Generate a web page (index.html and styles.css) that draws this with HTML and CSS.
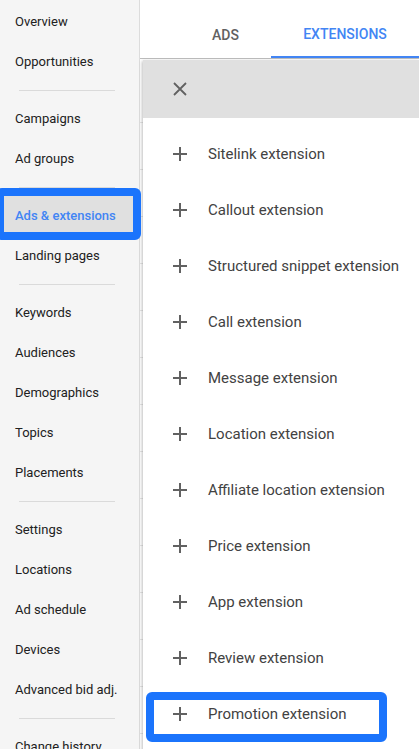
FILE: index.html
```html
<!DOCTYPE html>
<html lang="en">
<head>
    <meta charset="UTF-8">
    <meta name="viewport" content="width=device-width, initial-scale=1.0">
    <title>Ads &amp; extensions</title>
    <link rel="stylesheet" href="styles.css">
</head>
<body>
    <div class="app">
        <nav class="sidebar">
            <ul class="nav-group first">
                <li class="nav-item">Overview</li>
                <li class="nav-item">Opportunities</li>
            </ul>
            <div class="nav-divider"></div>
            <ul class="nav-group">
                <li class="nav-item">Campaigns</li>
                <li class="nav-item">Ad groups</li>
            </ul>
            <div class="nav-divider"></div>
            <ul class="nav-group">
                <li class="nav-item active">Ads &amp; extensions</li>
                <li class="nav-item">Landing pages</li>
            </ul>
            <div class="nav-divider"></div>
            <ul class="nav-group">
                <li class="nav-item">Keywords</li>
                <li class="nav-item">Audiences</li>
                <li class="nav-item">Demographics</li>
                <li class="nav-item">Topics</li>
                <li class="nav-item">Placements</li>
            </ul>
            <div class="nav-divider"></div>
            <ul class="nav-group">
                <li class="nav-item">Settings</li>
                <li class="nav-item">Locations</li>
                <li class="nav-item">Ad schedule</li>
                <li class="nav-item">Devices</li>
                <li class="nav-item">Advanced bid adj.</li>
            </ul>
            <div class="nav-divider"></div>
            <ul class="nav-group">
                <li class="nav-item">Change history</li>
            </ul>
        </nav>

        <main class="content">
            <div class="tabs">
                <div class="tab">Ads</div>
                <div class="tab active">Extensions</div>
            </div>

            <div class="panel">
                <div class="panel-header">
                    <svg class="icon" width="14" height="14" viewBox="0 0 14 14">
                        <path d="M1 1L13 13M13 1L1 13" stroke="#616161" stroke-width="1.8" fill="none"/>
                    </svg>
                </div>
                <ul class="ext-list">
                    <li class="ext-item"><svg class="icon" width="14" height="14" viewBox="0 0 14 14"><path d="M7 0V14M0 7H14" stroke="#616161" stroke-width="2" fill="none"/></svg><span>Sitelink extension</span></li>
                    <li class="ext-item"><svg class="icon" width="14" height="14" viewBox="0 0 14 14"><path d="M7 0V14M0 7H14" stroke="#616161" stroke-width="2" fill="none"/></svg><span>Callout extension</span></li>
                    <li class="ext-item"><svg class="icon" width="14" height="14" viewBox="0 0 14 14"><path d="M7 0V14M0 7H14" stroke="#616161" stroke-width="2" fill="none"/></svg><span>Structured snippet extension</span></li>
                    <li class="ext-item"><svg class="icon" width="14" height="14" viewBox="0 0 14 14"><path d="M7 0V14M0 7H14" stroke="#616161" stroke-width="2" fill="none"/></svg><span>Call extension</span></li>
                    <li class="ext-item"><svg class="icon" width="14" height="14" viewBox="0 0 14 14"><path d="M7 0V14M0 7H14" stroke="#616161" stroke-width="2" fill="none"/></svg><span>Message extension</span></li>
                    <li class="ext-item"><svg class="icon" width="14" height="14" viewBox="0 0 14 14"><path d="M7 0V14M0 7H14" stroke="#616161" stroke-width="2" fill="none"/></svg><span>Location extension</span></li>
                    <li class="ext-item"><svg class="icon" width="14" height="14" viewBox="0 0 14 14"><path d="M7 0V14M0 7H14" stroke="#616161" stroke-width="2" fill="none"/></svg><span>Affiliate location extension</span></li>
                    <li class="ext-item"><svg class="icon" width="14" height="14" viewBox="0 0 14 14"><path d="M7 0V14M0 7H14" stroke="#616161" stroke-width="2" fill="none"/></svg><span>Price extension</span></li>
                    <li class="ext-item"><svg class="icon" width="14" height="14" viewBox="0 0 14 14"><path d="M7 0V14M0 7H14" stroke="#616161" stroke-width="2" fill="none"/></svg><span>App extension</span></li>
                    <li class="ext-item"><svg class="icon" width="14" height="14" viewBox="0 0 14 14"><path d="M7 0V14M0 7H14" stroke="#616161" stroke-width="2" fill="none"/></svg><span>Review extension</span></li>
                    <li class="ext-item"><svg class="icon" width="14" height="14" viewBox="0 0 14 14"><path d="M7 0V14M0 7H14" stroke="#616161" stroke-width="2" fill="none"/></svg><span>Promotion extension</span></li>
                </ul>
            </div>
        </main>

        <div class="callout callout-nav"></div>
        <div class="callout callout-promo"></div>
    </div>
</body>
</html>
```

FILE: styles.css
```css
* {
    box-sizing: border-box;
}
body {
    margin: 0;
    font-family: Roboto, "Noto Sans", Arial, sans-serif;
    background: #fff;
    overflow: hidden;
}
ul {
    list-style: none;
    margin: 0;
    padding: 0;
}
.app {
    position: relative;
    display: flex;
    height: 749px;
    overflow: hidden;
}

/* left nav */
.sidebar {
    width: 140px;
    flex-shrink: 0;
    background: #f5f5f5;
    border-right: 1px solid #dcdcdc;
}
.nav-group.first {
    padding-top: 2px;
}
.nav-item {
    height: 40px;
    line-height: 40px;
    padding-left: 15px;
    font-size: 13px;
    color: #212121;
    white-space: nowrap;
}
.nav-item.active {
    background: #e0e0e0;
    color: #4285f4;
    font-weight: 500;
}
.nav-divider {
    height: 1px;
    margin: 8px 24px 8px 19px;
    background: #dadada;
}

/* main */
.content {
    flex: 1;
    min-width: 0;
    background: repeating-linear-gradient(to bottom, #fff 0, #fff 46px, #e6e6e6 46px, #e6e6e6 47px) 0 76px;
}
.tabs {
    display: flex;
    height: 59px;
    padding-left: 40px;
    background: #fff;
    border-bottom: 1px solid #bdbdbd;
}
.tab {
    width: 91px;
    height: 58px;
    line-height: 70px;
    text-align: center;
    font-size: 14px;
    font-weight: 500;
    color: #616161;
    text-transform: uppercase;
}
.tab.active {
    flex: 1;
    color: #4285f4;
    border-bottom: 2px solid #4285f4;
    line-height: 68px;
}

.panel {
    margin-left: 3px;
    margin-top: 1px;
    background: #fff;
    box-shadow: -1px 1px 3px rgba(0, 0, 0, 0.25);
    height: 700px;
}
.panel-header {
    height: 58px;
    background: #e0e0e0;
    display: flex;
    align-items: center;
    padding-left: 30px;
}
.ext-list {
    padding-top: 8px;
}
.ext-item {
    display: flex;
    align-items: center;
    height: 56px;
    padding-left: 30px;
    font-size: 15px;
    color: #424242;
    white-space: nowrap;
}
.ext-item .icon {
    margin-right: 21px;
    flex-shrink: 0;
}

/* highlight boxes */
.callout {
    position: absolute;
    border: 8px solid #1b74fc;
    border-radius: 6px;
}
.callout-nav {
    left: -4px;
    top: 188px;
    width: 145px;
    height: 52px;
}
.callout-promo {
    left: 146px;
    top: 692px;
    width: 241px;
    height: 50px;
}
```
